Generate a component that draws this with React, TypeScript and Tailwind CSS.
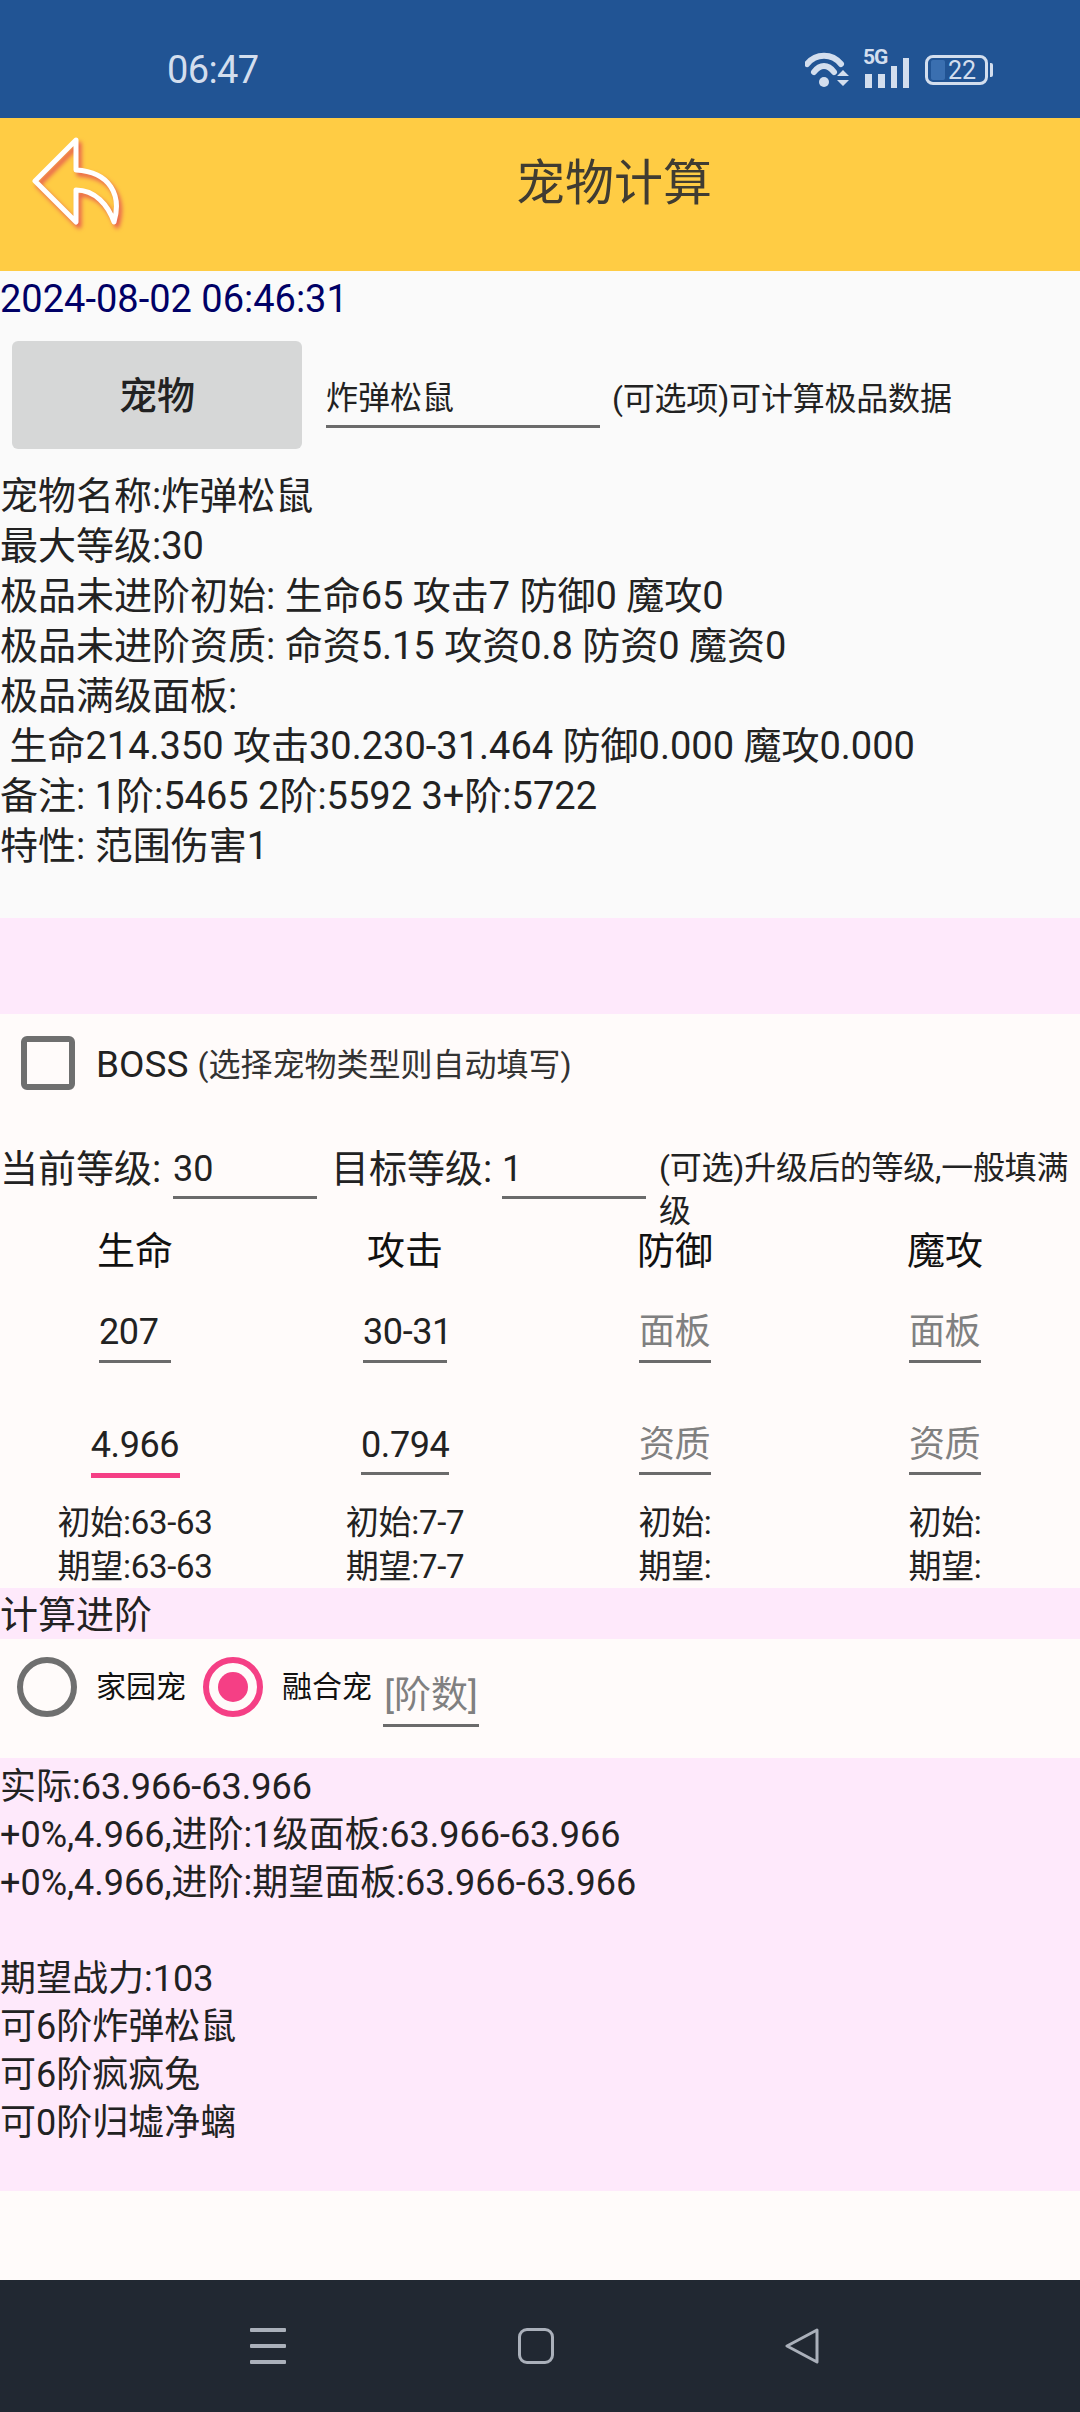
import React from 'react';

const detailLines = [
  '宠物名称:炸弹松鼠',
  '最大等级:30',
  '极品未进阶初始: 生命65 攻击7 防御0 魔攻0',
  '极品未进阶资质: 命资5.15 攻资0.8 防资0 魔资0',
  '极品满级面板:',
  '\u00a0生命214.350 攻击30.230-31.464 防御0.000 魔攻0.000',
  '备注: 1阶:5465 2阶:5592 3+阶:5722',
  '特性: 范围伤害1',
];

const resultLines = [
  '实际:63.966-63.966',
  '+0%,4.966,进阶:1级面板:63.966-63.966',
  '+0%,4.966,进阶:期望面板:63.966-63.966',
  '\u00a0',
  '期望战力:103',
  '可6阶炸弹松鼠',
  '可6阶疯疯兔',
  '可0阶归墟净螭',
];

interface Stat {
  name: string;
  panel: string;
  quality: string;
  panelWidth: string;
  qualityWidth: string;
  focused?: boolean;
  start: string;
  expect: string;
}

const stats: Stat[] = [
  { name: '生命', panel: '207', quality: '4.966', panelWidth: 'w-[72px]', qualityWidth: 'w-[89px]', focused: true, start: '初始:63-63', expect: '期望:63-63' },
  { name: '攻击', panel: '30-31', quality: '0.794', panelWidth: 'w-[84px]', qualityWidth: 'w-[88px]', start: '初始:7-7', expect: '期望:7-7' },
  { name: '防御', panel: '', quality: '', panelWidth: 'w-[72px]', qualityWidth: 'w-[72px]', start: '初始:', expect: '期望:' },
  { name: '魔攻', panel: '', quality: '', panelWidth: 'w-[72px]', qualityWidth: 'w-[72px]', start: '初始:', expect: '期望:' },
];

const StatColumn: React.FC<{ stat: Stat }> = ({ stat }) => (
  <div className="flex flex-col items-center">
    <div className="h-[54px] text-[38px] leading-[54px] text-[#111]">{stat.name}</div>
    <div className={`mt-[25px] h-[60px] border-b-[3px] border-[#6b6b6b] text-[36px] leading-[59px] tracking-[-0.4px] whitespace-nowrap ${stat.panelWidth} ${stat.panel ? 'text-[#222]' : 'text-[#808080]'}`}>
      {stat.panel || '面板'}
    </div>
    <div className="mt-[53px] h-[62px]">
      <div className={`text-[36px] leading-[58px] tracking-[-0.4px] whitespace-nowrap ${stat.qualityWidth} ${stat.focused ? 'h-[62px] border-b-[5px] border-[#f53f85]' : 'h-[59px] border-b-[3px] border-[#6b6b6b]'} ${stat.quality ? 'text-center text-[#222]' : 'text-[#808080]'}`}>
        {stat.quality || '资质'}
      </div>
    </div>
    <div className="mt-[23px] h-[87px] text-center text-[33px] leading-[44px] tracking-[-0.3px] text-[#222]">
      <p>{stat.start}</p>
      <p>{stat.expect}</p>
    </div>
  </div>
);

const App: React.FC = () => {
  return (
    <div className="flex h-[2412px] w-[1080px] flex-col overflow-hidden bg-[#fffbfa] [font-family:Roboto,'Noto_Sans_CJK_SC',sans-serif] text-[#222]">
      {/* status bar */}
      <div className="flex h-[118px] items-center justify-between bg-[#215494] pt-[22px] pr-[87px] pl-[167px] text-[#d3deee]">
        <span className="text-[38px] tracking-[-0.6px]">06:47</span>
        <div className="flex items-center">
          <svg width="44" height="36" viewBox="0 0 44 36" fill="none">
            <path d="M2 12 C11 1 27 1 36 12" stroke="#d3deee" strokeWidth="6" strokeLinecap="round" />
            <path d="M9 20 C15 12 23 12 29 20" stroke="#d3deee" strokeWidth="6" strokeLinecap="round" />
            <circle cx="19" cy="30" r="5" fill="#d3deee" />
            <path d="M32 24 L38 18 L44 24 Z M32 28 L44 28 L38 34 Z" fill="#d3deee" />
          </svg>
          <div className="relative ml-[14px] h-[36px] w-[46px]">
            <span className="absolute -top-[6px] left-0 text-[21px] leading-[22px] font-bold tracking-[-1px]">5G</span>
            <div className="absolute right-0 bottom-0 flex items-end gap-[6px]">
              <div className="h-[14px] w-[7px] bg-[#d3deee]" />
              <div className="h-[14px] w-[7px] bg-[#d3deee]" />
              <div className="h-[22px] w-[6px] bg-[#d3deee]" />
              <div className="h-[30px] w-[6px] bg-[#d3deee]" />
            </div>
          </div>
          <div className="ml-[16px] flex h-[30px] w-[63px] items-center rounded-[8px] border-[3px] border-[#d3deee] pl-[3px]">
            <div className="h-[20px] w-[14px] rounded-[2px] bg-[#3a6fb0]" />
            <span className="ml-[3px] text-[25px] leading-none">22</span>
          </div>
          <div className="ml-[2px] h-[14px] w-[3px] rounded-r-[2px] bg-[#d3deee]" />
        </div>
      </div>

      {/* title bar */}
      <div className="flex h-[153px] items-start bg-[#ffcc44]">
        <div className="w-[148px] pt-[12px] pl-[30px]">
          <svg width="95" height="100" viewBox="0 0 95 100" fill="none" className="drop-shadow-[3px_4px_2px_#e8604f]">
            <path d="M46 10 L5 51 L46 92 V60 C65 60 78 75 84 92 C92 65 80 42 46 40 Z" stroke="#fff" strokeWidth="5" strokeLinejoin="round" />
          </svg>
        </div>
        <div className="flex-1 pt-[35px] text-center text-[49px] leading-[62px] text-[#403c32]">宠物计算</div>
      </div>

      {/* upper part */}
      <div className="bg-[#fafafa]">
        <div className="h-[54px] text-[38px] leading-[56px] text-[#000066]">2024-08-02 06:46:31</div>
        <div className="flex items-start pt-[16px] pb-[21px] pl-[12px]">
          <button className="h-[108px] w-[290px] rounded-[6px] bg-[#d6d7d7] pt-[2px] text-[38px] font-medium text-[#222]">宠物</button>
          <div className="mt-[28px] ml-[24px] h-[59px] w-[274px] border-b-[3px] border-[#6b6b6b] text-[32px] leading-[59px]">炸弹松鼠</div>
          <span className="mt-[29px] ml-[12px] text-[32px] leading-[58px] tracking-[-0.2px]">(可选项)可计算极品数据</span>
        </div>
        <div className="pt-[1px] pb-[47px] text-[38px] leading-[50px] whitespace-nowrap">
          {detailLines.map((line) => (
            <p key={line}>{line}</p>
          ))}
        </div>
      </div>

      <div className="h-[96px] bg-[#fee9fb]" />

      {/* input part */}
      <div className="flex h-[98px] items-center pt-[4px] pl-[21px]">
        <div className="-mt-[4px] h-[54px] w-[54px] rounded-[6px] border-[6px] border-[#6f6f6f]" />
        <span className="ml-[21px] text-[37px]">BOSS</span>
        <span className="ml-[9px] text-[32px] text-[#333]">(选择宠物类型则自动填写)</span>
      </div>
      <div className="flex h-[112px] items-start">
        <span className="mt-[28px] w-[173px] text-[38px] leading-[58px] whitespace-nowrap">当前等级:</span>
        <div className="mt-[28px] h-[59px] w-[144px] border-b-[3px] border-[#6b6b6b] text-[36px] leading-[58px]">30</div>
        <span className="mt-[28px] ml-[14px] w-[171px] text-[38px] leading-[58px] whitespace-nowrap">目标等级:</span>
        <div className="mt-[28px] h-[59px] w-[144px] border-b-[3px] border-[#6b6b6b] text-[36px] leading-[58px]">1</div>
        <span className="mt-[35px] ml-[13px] w-[421px] text-[32px] leading-[43px] tracking-[-0.2px]">(可选)升级后的等级,一般填满级</span>
      </div>
      <div className="grid grid-cols-4">
        {stats.map((stat) => (
          <StatColumn key={stat.name} stat={stat} />
        ))}
      </div>

      <div className="h-[51px] bg-[#fee9fb] text-[38px] leading-[54px]">计算进阶</div>

      <div className="flex h-[119px] items-start pt-[18px] pl-[17px]">
        <div className="h-[60px] w-[60px] rounded-full border-[6px] border-[#6f6f6f]" />
        <span className="ml-[19px] w-[107px] text-[30px] leading-[60px] text-[#111]">家园宠</span>
        <div className="flex h-[60px] w-[60px] items-center justify-center rounded-full border-[6px] border-[#f53f85]">
          <div className="h-[30px] w-[30px] rounded-full bg-[#f53f85]" />
        </div>
        <span className="ml-[19px] w-[101px] text-[30px] leading-[60px] text-[#111]">融合宠</span>
        <div className="mt-[9px] h-[61px] w-[96px] border-b-[3px] border-[#6b6b6b] text-center text-[37px] leading-[60px] whitespace-nowrap text-[#808080]">[阶数]</div>
      </div>

      <div className="h-[433px] bg-[#fee9fb] pt-[5px] text-[36px] leading-[48px] whitespace-nowrap">
        {resultLines.map((line) => (
          <p key={line}>{line}</p>
        ))}
      </div>

      <div className="h-[89px]" />

      {/* nav bar */}
      <div className="flex h-[132px] items-center justify-between bg-[#212832] pr-[261px] pl-[250px]">
        <div className="flex h-[36px] w-[36px] flex-col justify-between">
          <div className="h-[4px] rounded-[1px] bg-[#aab0ba]" />
          <div className="h-[4px] rounded-[1px] bg-[#aab0ba]" />
          <div className="h-[4px] rounded-[1px] bg-[#aab0ba]" />
        </div>
        <div className="h-[36px] w-[36px] rounded-[9px] border-[3px] border-[#aab0ba]" />
        <svg width="34" height="36" viewBox="0 0 34 36" fill="none">
          <path d="M32 2 L2 18 L32 34 Z" stroke="#aab0ba" strokeWidth="3" strokeLinejoin="round" />
        </svg>
      </div>
    </div>
  );
};

export default App;
